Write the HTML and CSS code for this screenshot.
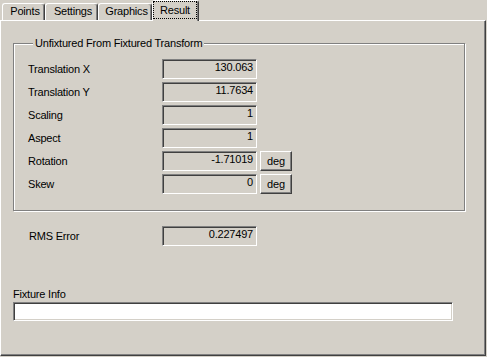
FILE: index.html
```html
<!DOCTYPE html>
<html lang="en">
<head>
    <meta charset="UTF-8">
    <title>Result</title>
    <link rel="stylesheet" href="styles.css">
</head>
<body>
<div class="tabs">
    <div class="tab tab-points">Points</div>
    <div class="tab tab-settings">Settings</div>
    <div class="tab tab-graphics">Graphics</div>
    <div class="tab tab-active"><span class="focus">Result</span></div>
</div>
<div class="panel">
    <div class="group">
        <div class="legend">Unfixtured From Fixtured Transform</div>
        <div class="fields">
            <div class="label">Translation X</div>
            <div class="value">130.063</div>
            <div></div>

            <div class="label">Translation Y</div>
            <div class="value">11.7634</div>
            <div></div>

            <div class="label">Scaling</div>
            <div class="value">1</div>
            <div></div>

            <div class="label">Aspect</div>
            <div class="value">1</div>
            <div></div>

            <div class="label">Rotation</div>
            <div class="value">-1.71019</div>
            <button class="btn">deg</button>

            <div class="label">Skew</div>
            <div class="value">0</div>
            <button class="btn">deg</button>
        </div>
    </div>

    <div class="rms">
        <div class="label">RMS Error</div>
        <div class="value">0.227497</div>
    </div>

    <div class="info-label">Fixture Info</div>
    <input class="info" type="text">
</div>
</body>
</html>
```

FILE: styles.css
```css
* {
    margin: 0;
    padding: 0;
}

body {
    height: 357px;
    overflow: hidden;
    background: #d4d0c8;
    color: #000;
    font: 11px/13px "Liberation Sans", Arial, sans-serif;
    letter-spacing: -0.2px;
}

/* tab strip */
.tabs {
    display: flex;
    align-items: flex-end;
    height: 20px;
    padding-left: 2px;
}

.tab {
    box-sizing: border-box;
    height: 17px;
    border: 1px solid #fff;
    border-bottom: 0;
    border-right-color: #404040;
    border-radius: 3px 3px 0 0;
    box-shadow: inset -1px 0 0 #808080;
    padding-left: 3px;
    line-height: 15px;
    text-align: center;
}

.tab-points { width: 43px; }
.tab-settings { width: 53px; }
.tab-graphics { width: 54px; }

.tab-active {
    position: relative;
    z-index: 1;
    width: 47px;
    height: 21px;
    margin-bottom: -1px;
    padding-left: 0;
    background: #d4d0c8;
}

.tab-active .focus {
    display: block;
    box-sizing: border-box;
    height: 18px;
    margin-right: 1px;
    border: 1px dotted #000;
    line-height: 16px;
}

/* page body */
.panel {
    box-sizing: border-box;
    width: 486px;
    height: 336px;
    padding-left: 12px;
    border: 1px solid #fff;
    border-right-color: #404040;
    border-bottom-color: #404040;
    box-shadow: inset -1px -1px 0 #808080;
}

.group {
    box-sizing: border-box;
    width: 452px;
    margin-top: 22px;
    padding: 0 0 16px 14px;
    border: 1px solid #808080;
    box-shadow: inset 1px 1px 0 #fff, 1px 1px 0 #fff;
}

.legend {
    width: max-content;
    margin: -7px 0 0 5px;
    padding: 0 2px;
    background: #d4d0c8;
}

.fields {
    display: grid;
    grid-template-columns: 131px 95px 32px;
    grid-auto-rows: 20px;
    column-gap: 3px;
    row-gap: 3px;
    align-items: center;
    margin-top: 9px;
}

.value {
    box-sizing: border-box;
    height: 20px;
    padding: 1px 3px 0 0;
    border: 1px solid;
    border-color: #808080 #fff #fff #808080;
    box-shadow: inset 1px 1px 0 #404040, inset -1px -1px 0 #d4d0c8;
    text-align: right;
}

.btn {
    box-sizing: border-box;
    height: 20px;
    border: 1px solid;
    border-color: #fff #404040 #404040 #fff;
    box-shadow: inset -1px -1px 0 #808080;
    background: #d4d0c8;
    font: inherit;
    letter-spacing: inherit;
    color: #000;
}

.rms {
    display: grid;
    grid-template-columns: 133px 95px;
    align-items: center;
    margin-top: 15px;
    padding-left: 16px;
}

.info-label {
    margin-top: 42px;
}

.info {
    display: block;
    box-sizing: border-box;
    width: 440px;
    height: 19px;
    margin-top: 1px;
    border: 1px solid;
    border-color: #808080 #fff #fff #808080;
    box-shadow: inset 1px 1px 0 #404040, inset -1px -1px 0 #d4d0c8;
    background: #fff;
    outline: none;
}
```
